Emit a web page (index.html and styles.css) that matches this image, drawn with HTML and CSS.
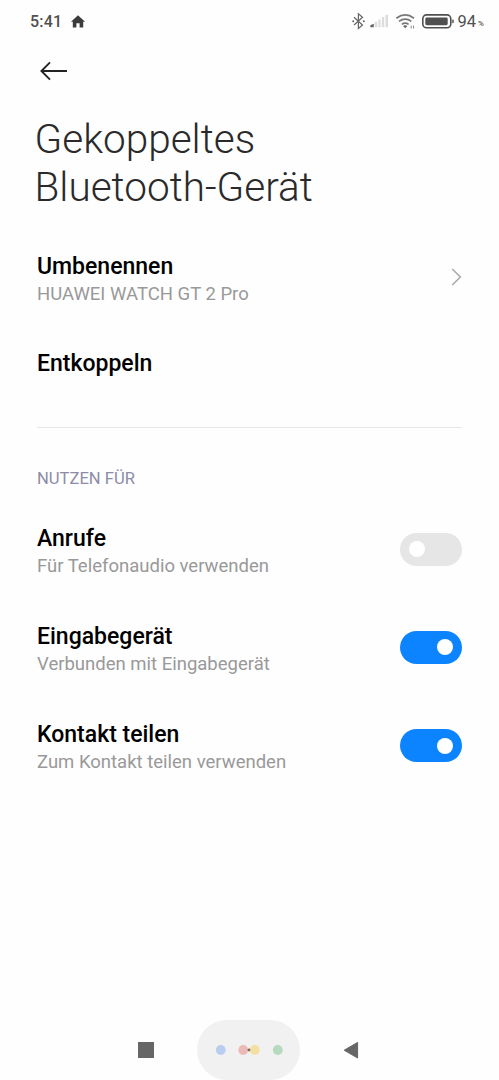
FILE: index.html
```html
<!DOCTYPE html>
<html lang="de">
<head>
    <meta charset="UTF-8">
    <meta name="viewport" content="width=device-width, initial-scale=1.0">
    <title>Gekoppeltes Bluetooth-Gerät</title>
    <link rel="stylesheet" href="styles.css">
</head>
<body>
    <div class="status-bar">
        <span class="time">5:41</span>
        <svg class="home" width="14" height="13" viewBox="0 0 14 13">
            <path d="M7 0.2 L14 6.8 H12.2 V12.6 H8.6 V8.3 H5.4 V12.6 H1.8 V6.8 H0 Z" fill="#3c3c3c"/>
        </svg>
        <svg class="status-icons" width="106" height="20" viewBox="350 11 106 20">
            <g fill="none" stroke="#666" stroke-width="1.2">
                <path d="M354 17.2 L362.5 25 L358.4 28.4 V13.9 L362.5 17.3 L354 25"/>
            </g>
            <g fill="#666">
                <circle cx="353.2" cy="21.2" r="1"/>
                <circle cx="363.8" cy="21.2" r="1"/>
                <path d="M370.3 27.2 V25.2 L373.8 23.7 V27.2 Z"/>
            </g>
            <g fill="#dcdcdc">
                <path d="M374.8 27.2 V21.8 H377.2 V27.2 Z"/>
                <path d="M378.4 27.2 V19.6 H380.6 V27.2 Z"/>
                <path d="M381.9 27.2 V17.2 H384.2 V27.2 Z"/>
                <path d="M385.5 27.2 V14.8 H388 V27.2 Z"/>
            </g>
            <g fill="none" stroke="#777" stroke-width="1.7">
                <path d="M396.4 18.2 Q405.2 11.6 414 18.2"/>
                <path d="M399 21.4 Q405.2 16.8 411.4 21.4"/>
                <path d="M401.8 24.4 Q405.2 22 408.6 24.4"/>
            </g>
            <path d="M403 26 Q405.2 24.6 407.4 26 L405.2 28.2 Z" fill="#666"/>
            <path d="M411.2 28.5 V25.6 M413.6 25.6 V28.5" stroke="#888" stroke-width="1"/>
            <rect x="422.8" y="14.9" width="28" height="12.8" rx="3.8" fill="none" stroke="#505050" stroke-width="1.6"/>
            <rect x="425.3" y="17.4" width="22.4" height="7.8" rx="1.4" fill="#505050"/>
            <rect x="452.2" y="19.4" width="1.5" height="3.8" rx="0.7" fill="#505050"/>
        </svg>
        <span class="battery">94</span>
        <span class="percent">%</span>
    </div>

    <div class="back">
        <svg width="28" height="20" viewBox="0 0 28 20">
            <path d="M27 10 H1.5 M10 1.4 L1.4 10 L10 18.6" fill="none" stroke="#222" stroke-width="1.9"/>
        </svg>
    </div>

    <h1>Gekoppeltes<br>Bluetooth-Gerät</h1>

    <div class="row">
        <div class="text">
            <h3>Umbenennen</h3>
            <p>HUAWEI WATCH GT 2 Pro</p>
        </div>
        <svg class="chevron" width="11" height="18" viewBox="0 0 11 18">
            <path d="M1.2 1 L9.4 9 L1.2 17" fill="none" stroke="#aaa" stroke-width="1.6"/>
        </svg>
    </div>
    <div class="row single">
        <h3>Entkoppeln</h3>
    </div>

    <h2>NUTZEN FÜR</h2>

    <div class="row">
        <div class="text">
            <h3>Anrufe</h3>
            <p>Für Telefonaudio verwenden</p>
        </div>
        <div class="switch"></div>
    </div>
    <div class="row">
        <div class="text">
            <h3>Eingabegerät</h3>
            <p>Verbunden mit Eingabegerät</p>
        </div>
        <div class="switch on"></div>
    </div>
    <div class="row">
        <div class="text">
            <h3>Kontakt teilen</h3>
            <p>Zum Kontakt teilen verwenden</p>
        </div>
        <div class="switch on"></div>
    </div>

    <div class="nav-bar">
        <div class="recent"></div>
        <div class="assistant">
            <svg width="103" height="60" viewBox="0 0 103 60">
                <circle cx="23.8" cy="30" r="4.9" fill="#b9cdf0"/>
                <circle cx="46.2" cy="30" r="4.9" fill="#ebbab5"/>
                <circle cx="57.8" cy="30" r="4.9" fill="#f3dfa0"/>
                <circle cx="80.8" cy="30" r="4.9" fill="#b5dabf"/>
                <circle cx="52" cy="30" r="1.4" fill="#806a60"/>
            </svg>
        </div>
        <svg class="previous" width="16" height="18" viewBox="0 0 16 18">
            <path d="M14.6 1.4 V17 L1.2 9.2 Z" fill="#666" stroke="#666" stroke-width="1" stroke-linejoin="round"/>
        </svg>
    </div>
</body>
</html>
```
FILE: styles.css
```css
* {
    box-sizing: border-box;
}

body {
    font-family: Roboto, "Liberation Sans", sans-serif;
    background-color: #fefefe;
    margin: 0;
    height: 1080px;
    display: flex;
    flex-direction: column;
    overflow: hidden;
}

h1, h2, h3, p {
    margin: 0;
}

.status-bar {
    display: flex;
    align-items: center;
    height: 42px;
    padding: 0 15px 0 30px;
    color: #505050;
    font-size: 16px;
    font-weight: 500;
}

.time {
    letter-spacing: 0.2px;
    width: 41px;
}

.status-icons {
    margin-left: auto;
}

.battery {
    margin-left: 2px;
    font-size: 16.5px;
    font-weight: 400;
}

.percent {
    font-size: 8px;
    margin: 5px 0 0 2px;
}

.back {
    height: 74px;
    padding: 19px 0 0 40px;
}

h1 {
    height: 112px;
    padding-left: 34.5px;
    font-size: 40.5px;
    font-weight: 300;
    line-height: 47.5px;
    color: #2a2a2a;
}

.row {
    display: flex;
    align-items: center;
    justify-content: space-between;
    height: 98.3px;
    margin: 0 37px;
}

.text {
    padding-top: 6px;
}

.row h3 {
    font-size: 23px;
    font-weight: 500;
    line-height: 28px;
    color: #000;
}

.row p {
    font-size: 18.5px;
    line-height: 27px;
    color: #999;
}

.single {
    height: 102px;
    padding-bottom: 25px;
    border-bottom: 1.5px solid #e6e6e6;
}

h2 {
    height: 71.6px;
    padding: 39px 37px 0;
    font-size: 16.6px;
    font-weight: 400;
    line-height: 24px;
    color: #8c8ca8;
}

.switch {
    display: flex;
    align-items: center;
    width: 62px;
    height: 33px;
    padding: 0 9px;
    border-radius: 17px;
    background-color: #e6e6e6;
}

.switch::before {
    content: "";
    width: 16px;
    height: 16px;
    border-radius: 50%;
    background-color: #fff;
}

.switch.on {
    justify-content: flex-end;
    background-color: #0d84ff;
}

.nav-bar {
    display: flex;
    align-items: center;
    height: 60px;
    margin-top: auto;
    padding-left: 138px;
}

.recent {
    width: 16px;
    height: 16px;
    background-color: #666;
}

.assistant {
    width: 103px;
    height: 60px;
    margin-left: 43px;
    border-radius: 30px;
    background-color: #f1f1f1;
}

.previous {
    margin-left: 43px;
}
```
